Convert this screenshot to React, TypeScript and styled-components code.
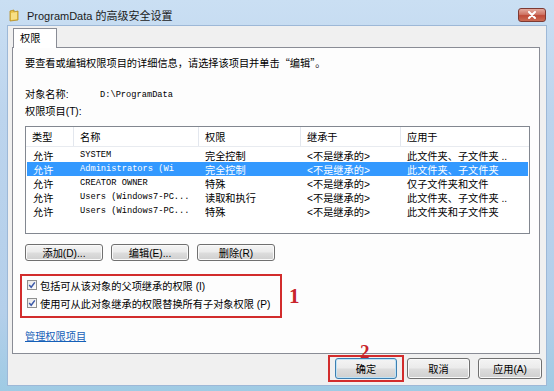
import React from 'react';
import styled, { createGlobalStyle } from 'styled-components';

const GlobalStyle = createGlobalStyle`
  html, body {
    margin: 0;
    padding: 0;
  }
  body {
    width: 554px;
    height: 391px;
    overflow: hidden;
    background: #fff;
  }
`;

const uiFont = `"Liberation Sans", "Noto Sans CJK SC", sans-serif`;
const cjkFont = `"Noto Sans CJK SC", "Liberation Sans", sans-serif`;
const monoFont = `"Liberation Mono", "Noto Sans CJK SC", monospace`;

const Window = styled.div`
  width: 554px;
  height: 391px;
  box-sizing: border-box;
  display: flex;
  flex-direction: column;
  background: linear-gradient(to bottom, #cadff3 0%, #bcd4ed 30%, #b4cfea 80%, #9fcbe4 100%);
  font-family: ${uiFont};
  color: #000;
`;

const TitleBar = styled.div`
  height: 26px;
  flex: none;
  box-sizing: border-box;
  display: flex;
  align-items: center;
  padding: 4px 8px 0 9px;
`;

const TitleText = styled.div`
  flex: 1;
  font-size: 11px;
  color: #1b1b1b;
  margin-left: 8px;
  white-space: nowrap;
`;

const CloseButton = styled.div`
  width: 28px;
  height: 14px;
  box-sizing: border-box;
  border: 1px solid #7d3a33;
  border-radius: 3px;
  background: linear-gradient(to bottom, #e4aa9e 0%, #cf7565 45%, #bf4a38 55%, #cb6c55 100%);
  display: flex;
  align-items: center;
  justify-content: center;
`;

const Client = styled.div`
  flex: 1;
  margin: 0 8px 6px 8px;
  box-sizing: border-box;
  display: flex;
  flex-direction: column;
  padding: 2px 4px 0 4px;
  background: #f0f0f0;
  box-shadow: 0 0 0 1px #9db8d7;
`;

const TabStrip = styled.div`
  height: 19px;
  flex: none;
  display: flex;
  padding-left: 1px;
`;

const Tab = styled.div`
  position: relative;
  z-index: 1;
  width: 44px;
  height: 20px;
  box-sizing: border-box;
  border: 1px solid #898c95;
  border-bottom: none;
  background: #fff;
  font-size: 10.2px;
  line-height: 19px;
  padding-left: 6px;
`;

const Panel = styled.div`
  height: 307px;
  flex: none;
  box-sizing: border-box;
  margin-right: 2px;
  border: 1px solid #898c95;
  background: #fdfdfd;
  padding: 8px 12px 0 12px;
  display: flex;
  flex-direction: column;
`;

const Line = styled.div<{ $top?: number; $cjk?: boolean }>`
  font-family: ${p => (p.$cjk ? cjkFont : uiFont)};
  font-size: 10.2px;
  line-height: 14px;
  height: 14px;
  white-space: nowrap;
  margin-top: ${p => p.$top ?? 0}px;
  display: flex;
  align-items: center;
`;

const FieldLabel = styled.span`
  width: 75px;
  flex: none;
`;

const MonoValue = styled.span`
  font-family: ${monoFont};
  font-size: 8.7px;
`;

const ListBox = styled.div`
  margin-top: 7px;
  width: 505px;
  height: 108px;
  box-sizing: border-box;
  border: 1px solid #828790;
  background: #fff;
  overflow: hidden;
`;

const HeaderRow = styled.div`
  height: 20px;
  box-sizing: border-box;
  display: flex;
  align-items: center;
  border-bottom: 1px solid #e8ebf0;
  margin-bottom: 1px;
`;

const colWidths = [48, 125, 102, 100, 127];

const Cell = styled.div<{ $w: number; $mono?: boolean; $header?: boolean }>`
  width: ${p => p.$w}px;
  flex: none;
  box-sizing: border-box;
  padding-left: 6px;
  font-family: ${p => (p.$mono ? monoFont : uiFont)};
  font-size: ${p => (p.$mono ? '8.7px' : '10.2px')};
  white-space: nowrap;
  overflow: hidden;
  height: 100%;
  display: flex;
  align-items: center;
  border-right: ${p => (p.$header ? '1px solid #e3e7ee' : 'none')};
`;

const Row = styled.div<{ $selected?: boolean }>`
  height: 14px;
  display: flex;
  align-items: center;
  margin: 0 1px;
  background: ${p => (p.$selected ? '#3399ff' : 'transparent')};
  color: ${p => (p.$selected ? '#fff' : '#000')};
`;

const ButtonRow = styled.div`
  margin-top: 10px;
  display: flex;
  gap: 8px;
`;

const Button = styled.button<{ $w: number; $h?: number; $primary?: boolean }>`
  width: ${p => p.$w}px;
  height: ${p => p.$h ?? 17}px;
  box-sizing: border-box;
  padding: 0;
  border: 1px solid ${p => (p.$primary ? '#3c7fb1' : '#707070')};
  border-radius: 3px;
  background: linear-gradient(to bottom, #f4f4f4 0%, #ebebeb 48%, #dddddd 52%, #cfcfcf 100%);
  box-shadow: ${p => (p.$primary ? 'inset 0 0 0 1px #bfe3f7' : 'inset 0 0 0 1px #fafafa')};
  font-family: ${uiFont};
  font-size: 10.2px;
  color: #000;
  display: flex;
  align-items: center;
  justify-content: center;
`;

const InheritRow = styled.div`
  margin-top: 13px;
  display: flex;
  align-items: center;
`;

const RedFrame = styled.div`
  position: relative;
  border: 2px solid #d22c2c;
  box-sizing: border-box;
`;

const CheckGroup = styled(RedFrame)`
  width: 262px;
  margin-left: -5px;
  padding: 0 0 4px 5px;
`;

const CheckRow = styled.div`
  height: 18px;
  display: flex;
  align-items: center;
  gap: 3px;
  font-size: 10.2px;
  white-space: nowrap;
`;

const CheckBox = styled.span`
  width: 10px;
  height: 10px;
  box-sizing: border-box;
  border: 1px solid #8e8f8f;
  background: linear-gradient(to bottom right, #e6e6e6, #fdfdfd);
  display: flex;
  align-items: center;
  justify-content: center;
`;

const Marker = styled.span<{ $size: number }>`
  font-family: "Liberation Serif", serif;
  font-weight: bold;
  font-size: ${p => p.$size}px;
  line-height: 1;
  color: #c8242b;
`;

const SideMarker = styled(Marker)`
  margin-left: 7px;
`;

const FloatingMarker = styled(Marker)`
  position: absolute;
  left: 30px;
  top: -15px;
`;

const Link = styled.a`
  margin-top: 12px;
  font-size: 10.2px;
  line-height: 14px;
  color: #1560b8;
  text-decoration: underline;
  align-self: flex-start;
`;

const Footer = styled.div`
  flex: 1;
  display: flex;
  justify-content: flex-end;
  align-items: flex-start;
  padding-top: 1px;
`;

const OkFrame = styled(RedFrame)`
  padding: 1px 5px;
  margin-right: 3px;
`;

const FooterButton = styled(Button)<{ $gap?: number }>`
  margin-top: 3px;
  margin-left: ${p => p.$gap ?? 8}px;
`;

const FolderIcon = () => (
  <svg width="10" height="13" viewBox="0 0 10 13">
    <path d="M1 2 L5 1 L5 3 L9 2 L9 11 L1 12 Z" fill="#eac54a" stroke="#b58b1e" strokeWidth="0.8" />
    <path d="M2 4 L8 3 L8 10 L2 11 Z" fill="#f7df85" />
  </svg>
);

const CloseGlyph = () => (
  <svg width="10" height="8" viewBox="0 0 10 8">
    <path d="M2 1 L8 7 M8 1 L2 7" stroke="#fff" strokeWidth="2" strokeLinecap="round" />
  </svg>
);

const CheckMark = () => (
  <svg width="8" height="8" viewBox="0 0 8 8">
    <path d="M1.2 4 L3.2 6.2 L6.8 1.4" fill="none" stroke="#3b58a8" strokeWidth="1.5" />
  </svg>
);

const headers = ['类型', '名称', '权限', '继承于', '应用于'];

const entries = [
  ['允许', 'SYSTEM', '完全控制', '<不是继承的>', '此文件夹、子文件夹 ..'],
  ['允许', 'Administrators (Wi', '完全控制', '<不是继承的>', '此文件夹、子文件夹'],
  ['允许', 'CREATOR OWNER', '特殊', '<不是继承的>', '仅子文件夹和文件'],
  ['允许', 'Users (Windows7-PC...', '读取和执行', '<不是继承的>', '此文件夹、子文件夹 ..'],
  ['允许', 'Users (Windows7-PC...', '特殊', '<不是继承的>', '此文件夹和子文件夹'],
];

export default function App() {
  return (
    <>
      <GlobalStyle />
      <Window>
        <TitleBar>
          <FolderIcon />
          <TitleText>ProgramData 的高级安全设置</TitleText>
          <CloseButton>
            <CloseGlyph />
          </CloseButton>
        </TitleBar>
        <Client>
          <TabStrip>
            <Tab>权限</Tab>
          </TabStrip>
          <Panel>
            <Line $cjk>要查看或编辑权限项目的详细信息，请选择该项目并单击“编辑”。</Line>
            <Line $top={18}>
              <FieldLabel>对象名称:</FieldLabel>
              <MonoValue>D:\ProgramData</MonoValue>
            </Line>
            <Line $top={3}>权限项目(T):</Line>
            <ListBox>
              <HeaderRow>
                {headers.map((h, i) => (
                  <Cell key={h} $w={colWidths[i]} $header={i < 4}>{h}</Cell>
                ))}
              </HeaderRow>
              {entries.map((row, r) => (
                <Row key={r} $selected={r === 1}>
                  {row.map((c, i) => (
                    <Cell key={i} $w={colWidths[i] - (i === 0 ? 1 : 0)} $mono={i === 1}>{c}</Cell>
                  ))}
                </Row>
              ))}
            </ListBox>
            <ButtonRow>
              <Button $w={78}>添加(D)...</Button>
              <Button $w={78}>编辑(E)...</Button>
              <Button $w={78}>删除(R)</Button>
            </ButtonRow>
            <InheritRow>
              <CheckGroup>
                <CheckRow>
                  <CheckBox><CheckMark /></CheckBox>
                  包括可从该对象的父项继承的权限 (I)
                </CheckRow>
                <CheckRow>
                  <CheckBox><CheckMark /></CheckBox>
                  使用可从此对象继承的权限替换所有子对象权限 (P)
                </CheckRow>
              </CheckGroup>
              <SideMarker $size={21}>1</SideMarker>
            </InheritRow>
            <Link>管理权限项目</Link>
          </Panel>
          <Footer>
            <OkFrame>
              <FloatingMarker $size={19}>2</FloatingMarker>
              <Button $w={62} $h={21} $primary>确定</Button>
            </OkFrame>
            <FooterButton $w={63} $h={21} $gap={0}>取消</FooterButton>
            <FooterButton $w={64} $h={21}>应用(A)</FooterButton>
          </Footer>
        </Client>
      </Window>
    </>
  );
}
